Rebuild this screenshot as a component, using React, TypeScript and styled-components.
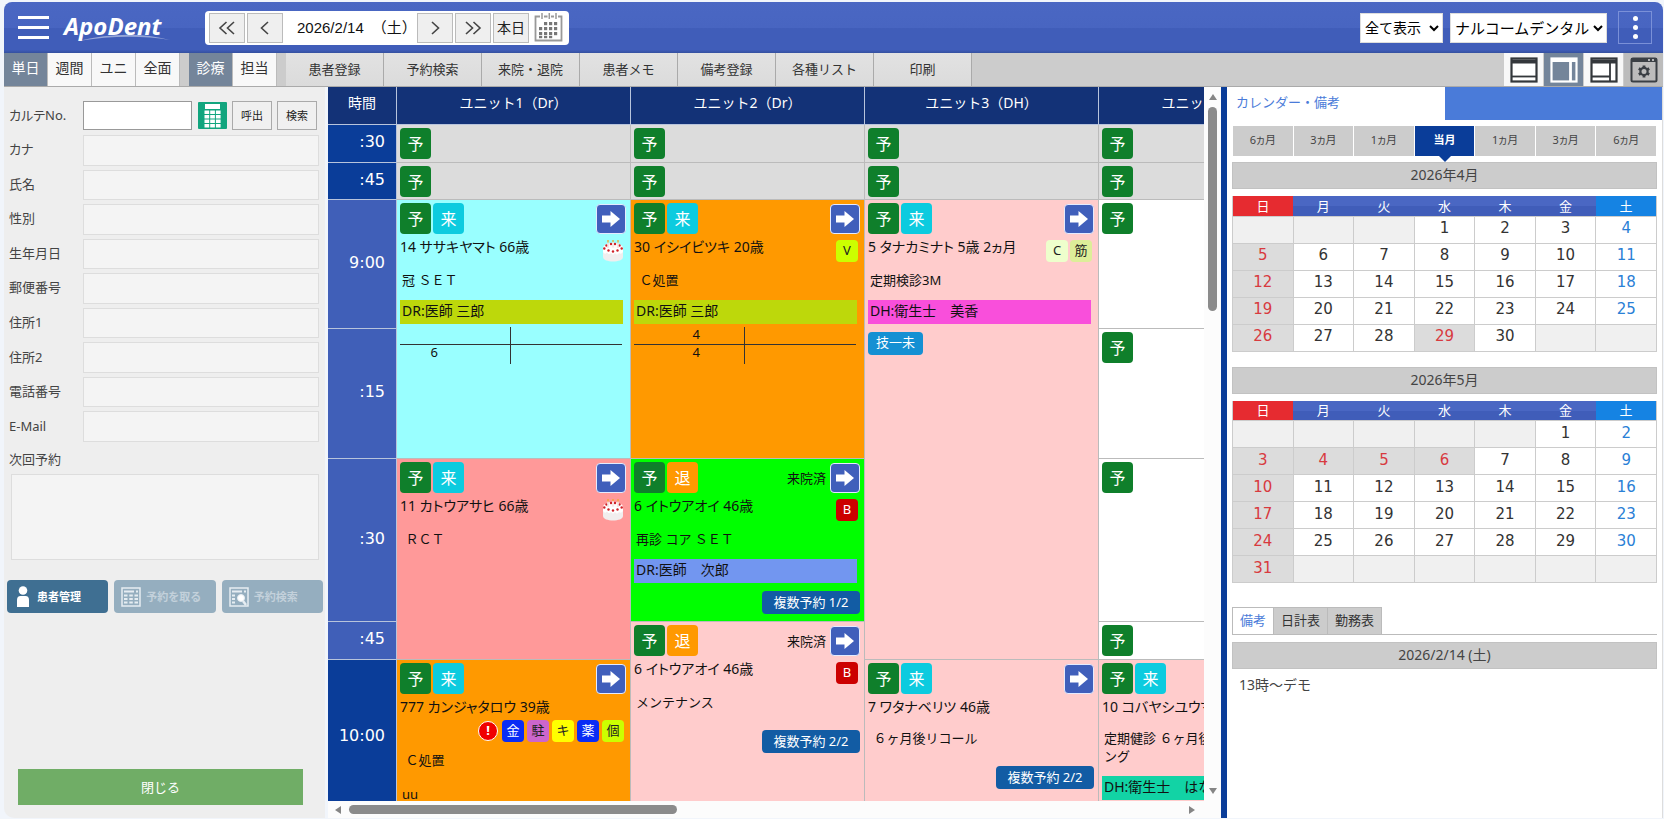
import React from "react";
import styled, { createGlobalStyle, css } from "styled-components";

const GlobalStyle = createGlobalStyle`
  *, *::before, *::after { box-sizing: border-box; }
  body {
    margin: 0;
    background: #fff;
    color: #333;
    font-family: "Noto Sans", "Noto Sans CJK JP", sans-serif;
    font-size: 13px;
    line-height: 18px;
  }
  button, input, textarea, select {
    margin: 0;
    padding: 0;
    border-radius: 0;
    font: inherit;
    color: inherit;
  }
  button { border: 0; background: none; cursor: pointer; white-space: nowrap; }
`;

const proportionalKana = css`
  font-feature-settings: "palt";
`;

const Shell = styled.div`
  display: flex;
  flex-direction: column;
  height: 100vh;
  padding: 2px 1px 1px 4px;
  background: #f1f5fb;
`;

/* ---------- Header ---------- */

const Header = styled.header`
  display: flex;
  align-items: center;
  flex: 0 0 51px;
  padding: 0 11px 0 14px;
  border-radius: 8px 8px 0 0;
  background: linear-gradient(#4a67c3 0, #4865c1 50%, #405db9 52%, #405db9 94%, #34509f 100%);
`;

const MenuButton = styled.button`
  display: flex;
  flex-direction: column;
  gap: 7px;
  width: 31px;
  margin-right: 15px;
`;

const MenuLine = styled.span`
  height: 3px;
  background: #fff;
`;

const Logo = styled.div`
  position: relative;
  width: 104px;
  height: 34px;
  margin-right: 37px;
  color: #fff;
  font: italic 700 24px/30px "Open Sans", sans-serif;
`;

const Swoosh = styled.svg`
  position: absolute;
  left: 14px;
  bottom: 3px;
  width: 92px;
  height: 10px;
`;

const DateBar = styled.div`
  display: flex;
  align-items: center;
  gap: 2px;
  height: 34px;
  padding: 0 6px 0 4px;
  border-radius: 4px;
  background: #fff;
`;

const StepButton = styled.button`
  display: flex;
  align-items: center;
  justify-content: center;
  width: 36px;
  height: 30px;
  border: 1px solid #bbb;
  background: #efefef;
  color: #222;
  font-size: 14px;
`;

const DateText = styled.div`
  display: flex;
  gap: 8px;
  width: 130px;
  padding-left: 12px;
  color: #111;
  font: 15px/22px "Liberation Sans", "Noto Sans CJK JP", sans-serif;
  white-space: nowrap;
`;

const IconButton = styled.button`
  display: flex;
  margin-left: 3px;
`;

const Spacer = styled.div`
  flex: 1;
`;

const HeaderSelect = styled.select<{ $width: number }>`
  width: ${(p) => p.$width}px;
  height: 30px;
  margin-right: 7px;
  border: 1px solid #ddd;
  background: #fff;
  color: #000;
  font-size: ${(p) => (p.$width > 100 ? 15 : 14)}px;
`;

const Kebab = styled.button`
  display: flex;
  flex-direction: column;
  align-items: center;
  justify-content: center;
  gap: 4px;
  width: 34px;
  height: 33px;
  margin-left: 4px;
  border: 1px solid #7a90d8;
`;

const Dot = styled.span`
  width: 5px;
  height: 5px;
  border-radius: 50%;
  background: #fff;
`;

/* ---------- Toolbar ---------- */

const Toolbar = styled.nav`
  display: flex;
  flex: 0 0 34px;
  border-bottom: 1px solid #aaa;
  background: #ccc;
`;

const ViewGroup = styled.div`
  display: flex;
  margin-right: 9px;
`;

const ViewButton = styled.button<{ $active?: boolean }>`
  width: 44px;
  padding-bottom: 3px;
  border-right: 1px solid #bbb;
  background: ${(p) => (p.$active ? "#74859a" : "#f8f8f8")};
  color: ${(p) => (p.$active ? "#fff" : "#333")};
  font-size: 14px;
`;

const MenuItem = styled.button`
  width: 98px;
  padding-bottom: 2px;
  border-right: 1px solid #aaa;
  background: linear-gradient(#e2e2e2, #dbdbdb);
  color: #333;
`;

const LayoutButton = styled.button<{ $tone: string }>`
  display: flex;
  align-items: center;
  justify-content: center;
  width: 40px;
  border-left: 1px solid #ccc;
  background: ${(p) => p.$tone};
`;

/* ---------- Patient panel ---------- */

const Main = styled.div`
  display: flex;
  flex: 1;
  min-height: 0;
`;

const PatientPanel = styled.aside`
  display: flex;
  flex-direction: column;
  flex: 0 0 321px;
  margin-right: 3px;
  padding: 14px 2px 13px 3px;
  border-radius: 0 0 0 10px;
  background: #eee;
`;

const ChartRow = styled.div`
  display: flex;
  align-items: center;
  padding: 0 2px;
  margin-bottom: 5px;
`;

const FieldLabel = styled.label`
  flex: 0 0 74px;
  padding-bottom: 2px;
  color: #444;
  white-space: nowrap;
  ${proportionalKana}
`;

const ChartInput = styled.input`
  width: 109px;
  height: 29px;
  margin-right: 3px;
  border: 1px solid #999;
  background: #fff;
`;

const SmallButton = styled.button`
  width: 40px;
  height: 29px;
  margin-left: 5px;
  border: 1px solid #aaa;
  background: #f0f0f0;
  color: #222;
  font-size: 11px;
`;

const Fields = styled.div`
  display: grid;
  grid-auto-rows: 1fr;
  gap: 4px;
  height: 307px;
  padding: 0 2px;
`;

const Field = styled.div`
  display: flex;
  align-items: center;
`;

const FieldInput = styled.input`
  width: 236px;
  height: 100%;
  border: 1px solid #ddd;
  background: #f4f4f4;
`;

const NextLabel = styled.label`
  margin: 8px 2px 6px;
  color: #444;
`;

const NextVisit = styled.textarea`
  flex: 0 0 86px;
  width: 308px;
  margin-left: 4px;
  border: 1px solid #ddd;
  background: #f4f4f4;
  resize: none;
`;

const ActionRow = styled.div`
  display: flex;
  gap: 6px;
  margin-top: 20px;
`;

const ActionButton = styled.button`
  display: flex;
  align-items: center;
  flex: 1;
  gap: 5px;
  height: 33px;
  padding-left: 7px;
  border-radius: 4px;
  background: #3f6f92;
  color: #fff;
  font-size: 11px;
  font-weight: 700;
  &:disabled {
    background: #95aebf;
    color: #c3d1db;
    cursor: default;
  }
`;

const CloseButton = styled.button`
  height: 36px;
  margin: auto 20px 0 11px;
  background: #70ad66;
  color: #fff;
`;

/* ---------- Schedule ---------- */

const Schedule = styled.section`
  display: grid;
  grid-template: minmax(0, 1fr) 17px / minmax(0, 1fr) 17px;
  flex: 1;
  min-width: 0;
  background: #fcfcfc;
`;

const Viewport = styled.div`
  min-width: 0;
  overflow: hidden;
`;

const Table = styled.table`
  width: 1005px;
  table-layout: fixed;
  border-collapse: separate;
  border-spacing: 0;
  color: #111;
`;

const UnitHead = styled.th<{ $time?: boolean }>`
  width: ${(p) => (p.$time ? 69 : 234)}px;
  height: 38px;
  padding: 0 0 5px;
  border-right: 1px solid #b8c4dc;
  border-bottom: 1px solid #b8c4dc;
  background: #133277;
  color: #fff;
  font-size: 14px;
  font-weight: 400;
`;

const TimeHead = styled.th<{ $height: number; $dark?: boolean }>`
  height: ${(p) => p.$height}px;
  padding: 0 11px 3px 0;
  border-right: 1px solid #b8c4dc;
  border-bottom: 1px solid #b8c4dc;
  background: ${(p) => (p.$dark ? "#0a3d99" : "#405fb8")};
  color: #fff;
  font: 400 16px/20px "DejaVu Sans", sans-serif;
  text-align: right;
`;

const Slot = styled.td<{ $color: string }>`
  padding: 3px 4px 0 3px;
  border-right: 1px solid #bbb;
  border-bottom: 1px solid #bbb;
  background: ${(p) => p.$color};
  vertical-align: top;
`;

const BadgeRow = styled.div`
  display: flex;
  align-items: center;
  gap: 2px;
  height: 31px;
`;

const Badge = styled.button<{ $color: string }>`
  width: 31px;
  height: 31px;
  border-radius: 4px;
  background: ${(p) => p.$color};
  color: #fff;
  font-size: 16px;
`;

const Arrived = styled.span`
  margin-left: auto;
`;

const ArrowButton = styled.button`
  display: flex;
  align-items: center;
  justify-content: center;
  width: 30px;
  height: 30px;
  margin-left: auto;
  border: 1px solid #e4ebff;
  border-radius: 4px;
  background: #405fbb;
  ${Arrived} + & {
    margin-left: 2px;
  }
`;

const NameRow = styled.div`
  display: flex;
  flex-wrap: wrap;
  justify-content: space-between;
  min-height: 26px;
  padding: 0 2px 0 0;
`;

const PatientName = styled.span`
  padding-top: 4px;
  height: 26px;
  font-size: 14px;
  white-space: nowrap;
  ${proportionalKana}
`;

const Tags = styled.span<{ $ownLine?: boolean }>`
  display: flex;
  gap: ${(p) => (p.$ownLine ? 3 : 2)}px;
  ${(p) =>
    p.$ownLine
      ? css`
          justify-content: flex-end;
          width: 100%;
        `
      : css`
          padding-top: 6px;
        `}
`;

const Tag = styled.span<{ $bg: string; $fg: string }>`
  width: 22px;
  height: 22px;
  border-radius: 4px;
  background: ${(p) => p.$bg};
  color: ${(p) => p.$fg};
  line-height: 21px;
  text-align: center;
`;

const Alert = styled.span`
  width: 20px;
  height: 20px;
  margin: 1px;
  border: 1px solid #fff;
  border-radius: 50%;
  background: #f00000;
  color: #fff;
  font-weight: 700;
  line-height: 17px;
  text-align: center;
`;

const Treatment = styled.p`
  margin: 9px 0 0 2px;
  padding-bottom: 11px;
  white-space: pre-wrap;
  & + & {
    margin-top: 5px;
  }
`;

const Band = styled.div<{ $color: string }>`
  height: 24px;
  margin-right: 3px;
  padding: 2px;
  background: ${(p) => p.$color};
  font-size: 14px;
  white-space: nowrap;
`;

const Teeth = styled.div`
  display: grid;
  grid-template: 18px 19px / 1fr 1fr;
  width: 222px;
  margin-top: 3px;
`;

const Quadrant = styled.span<{ $upper?: boolean; $left?: boolean }>`
  padding-right: ${(p) => (p.$left ? "44px" : "0")};
  border-right: ${(p) => (p.$left ? "1px solid #333" : "0")};
  border-bottom: ${(p) => (p.$upper ? "1px solid #333" : "0")};
  line-height: 15px;
  text-align: right;
`;

const Tooth = styled.span<{ $far?: boolean }>`
  margin-right: ${(p) => (p.$far ? 28 : 0)}px;
`;

const Chip = styled.span`
  display: block;
  width: 55px;
  height: 23px;
  margin-top: 8px;
  border-radius: 4px;
  background: #1590d3;
  color: #fff;
  line-height: 21px;
  text-align: center;
`;

const MultiButton = styled.button`
  display: block;
  width: 98px;
  height: 23px;
  margin: 8px 0 0 auto;
  border-radius: 4px;
  background: #125ca4;
  color: #fff;
  line-height: 21px;
`;

const ScrollBar = styled.div<{ $vertical?: boolean }>`
  display: flex;
  align-items: center;
  flex-direction: ${(p) => (p.$vertical ? "column" : "row")};
  grid-column: ${(p) => (p.$vertical ? 2 : 1)};
  grid-row: ${(p) => (p.$vertical ? 1 : 2)};
  gap: 5px;
  padding: ${(p) => (p.$vertical ? "6px 0" : "0 8px 0 6px")};
`;

const Thumb = styled.div<{ $vertical?: boolean }>`
  width: ${(p) => (p.$vertical ? "9px" : "38%")};
  height: ${(p) => (p.$vertical ? "29%" : "9px")};
  margin: ${(p) => (p.$vertical ? "1px 0 auto" : "0 auto 0 2px")};
  border-radius: 5px;
  background: #8b8b8b;
`;

/* ---------- Calendar panel ---------- */

const SidePanel = styled.aside`
  flex: 0 0 442px;
  border-left: 6px solid #0a3d99;
  border-right: 1px solid #ddd;
  background: #fff;
`;

const PanelTabs = styled.div`
  display: grid;
  grid-template-columns: 1fr 1fr;
  height: 33px;
  background: #4a7bd9;
`;

const PanelTab = styled.button`
  padding: 0 9px 3px;
  background: #fff;
  color: #4a7bd9;
  text-align: left;
`;

const PanelBody = styled.div`
  padding: 6px 5px 0;
`;

const Jumps = styled.div`
  display: flex;
  gap: 1px;
  padding: 0 1px;
  margin-bottom: 6px;
`;

const Jump = styled.button<{ $current?: boolean }>`
  position: relative;
  flex: 1;
  height: 30px;
  padding-bottom: 2px;
  background: ${(p) => (p.$current ? "#0a3d99" : "#ccc")};
  color: ${(p) => (p.$current ? "#fff" : "#444")};
  font-size: 11px;
  font-weight: ${(p) => (p.$current ? 700 : 400)};
  ${proportionalKana}
  &::after {
    content: ${(p) => (p.$current ? '""' : "none")};
    position: absolute;
    top: 100%;
    left: 50%;
    margin-left: -6px;
    border: 6px solid transparent;
    border-top-color: #0a3d99;
    border-bottom: 0;
  }
`;

const Title = styled.h2`
  height: 27px;
  margin: 0 0 7px;
  border: 1px solid #c2c2c2;
  background: #ccc;
  color: #444;
  font-size: 14px;
  font-weight: 400;
  line-height: 23px;
  text-align: center;
`;

const Month = styled.table`
  width: 100%;
  margin-bottom: 15px;
  border: 1px solid #ccc;
  border-top: 0;
  border-collapse: collapse;
  table-layout: fixed;
`;

const DayHead = styled.th<{ $day: number }>`
  height: 20px;
  padding: 0;
  background: ${(p) =>
    p.$day === 0 ? "#e62b30" : p.$day === 6 ? "#1583e3" : "linear-gradient(#4a67c3 50%, #405db9 52%)"};
  color: #fff;
  font-weight: 400;
  line-height: 18px;
`;

const DayCell = styled.td<{ $kind: "none" | "holiday" | "saturday" | "weekday" }>`
  height: 27px;
  padding: 0 0 3px;
  border: 1px solid #ccc;
  background: ${(p) => ({ none: "#f0f0f0", holiday: "#dcdcdc", saturday: "#fff", weekday: "#fff" })[p.$kind]};
  color: ${(p) => ({ none: "#333", holiday: "#d83a3f", saturday: "#2a80d6", weekday: "#333" })[p.$kind]};
  font: 15px/20px "DejaVu Sans", sans-serif;
  text-align: center;
`;

const NoteTabs = styled.div`
  display: flex;
  margin: 24px 0 7px;
  border-bottom: 1px solid #bbb;
`;

const NoteTab = styled.button<{ $active?: boolean }>`
  height: 27px;
  padding: 0 7px 2px;
  border: 1px solid #bbb;
  border-width: 1px 1px 0 ${(p) => (p.$active ? 1 : 0)}px;
  background: ${(p) => (p.$active ? "#fff" : "#ccc")};
  color: ${(p) => (p.$active ? "#4a7bd9" : "#333")};
`;

const Note = styled.p`
  margin: 0;
  padding-left: 7px;
  color: #444;
  font-size: 14px;
`;

/* ---------- Icons ---------- */

const Chevrons = ({ double, right }: { double?: boolean; right?: boolean }) => (
  <svg width="18" height="16" viewBox="0 0 18 16" fill="none" stroke="#444" strokeWidth="1.6" transform={right ? "scale(-1 1)" : undefined}>
    {double ? <path d="M8.5 2 2 8l6.500 6M16 2 9.500 8l6.500 6" /> : <path d="M12 2 5.500 8 12 14" />}
  </svg>
);

const CalendarIcon = () => (
  <svg width="29" height="29" viewBox="0 0 29 29" fill="none">
    <path d="M6 3.500H1.500v24h26v-24H24M10 3.500h3.500M17 3.500h3" stroke="#999" strokeWidth="1.800" />
    <path d="M8 0v6M15.300 0v6M22 0v6" stroke="#999" strokeWidth="1.500" />
    {[9, 14, 19].map((y, r) =>
      [5, 10, 15, 20].map((x, c) => (r === 0 && c === 0 ? null : <rect key={`${x}-${y}`} x={x} y={y} width="3.200" height="3.200" fill="#777" />))
    )}
    {[5, 10, 15].map((x) => (
      <rect key={x} x={x} y="23" width="3.200" height="2.200" fill="#777" />
    ))}
  </svg>
);

const CalculatorIcon = () => (
  <svg width="29" height="27" viewBox="0 0 29 27">
    <rect width="29" height="27" rx="1" fill="#12a57e" />
    <rect x="7" y="2" width="15" height="5" fill="#fff" />
    {[8.5, 13, 17.5, 22].map((y) => [6.5, 12.2, 17.9].map((x) => <rect key={`${x}-${y}`} x={x} y={y} width="4.700" height="3.500" fill="#fff" />))}
  </svg>
);

const LayoutIcon = ({ kind }: { kind: "bottom" | "side" | "both" }) => {
  const c = kind === "side" ? "#fff" : "#33373b";
  return (
    <svg width="28" height="26" viewBox="0 0 28 26" fill={kind === "side" ? "#74859a" : "#fff"} stroke={c}>
      <rect x="1.500" y="1.500" width="25" height="23" strokeWidth="2.200" />
      {kind === "bottom" && <path d="M1 19.500h26" strokeWidth="1.800" />}
      {kind === "side" && <path d="M1 3.500h26M20.500 2v22" strokeWidth="2.800" />}
      {kind === "both" && <path d="M20 6v18M1 19.500h19" strokeWidth="1.800" />}
      {kind !== "side" && <path d="M1 4.500h26" strokeWidth="4" />}
    </svg>
  );
};

const SettingsIcon = () => (
  <svg width="28" height="26" viewBox="0 0 28 26" fill="none" stroke="#3a3f44">
    <rect x="1.500" y="1.500" width="25" height="23" rx="1.500" strokeWidth="2" />
    <path d="M1 3h26" strokeWidth="4" />
    <path d="M18 3h2M22 3h2" stroke="#ddd" strokeWidth="1.500" />
    <circle cx="14" cy="14.500" r="3.600" strokeWidth="2.200" />
    <g strokeWidth="2.800">
      <path d="M14 8.500v2M14 18.500v2M8.800 11.500l1.800 1M17.400 16.500l1.800 1M8.800 17.500l1.800-1M17.400 12.500l1.800-1" />
    </g>
  </svg>
);

const ArrowIcon = () => (
  <svg width="18" height="16" viewBox="0 0 18 16" fill="#fff">
    <path d="M0 4.500h8.500V0L18 8l-9.500 8v-4.500H0z" />
  </svg>
);

const CakeIcon = () => (
  <svg width="22" height="22" viewBox="0 0 22 22">
    <path d="M1 9v8c0 6 20 6 20 0V9z" fill="#f1eeee" />
    <ellipse cx="11" cy="8" rx="10" ry="5" fill="#fffafa" />
    <path d="M1 8v4q2 3 4 .5 2 3 4 .5 2 3 4 0 2 3 4 0 2 2 4-1V8z" fill="#fff" />
    <g fill="#cf2027">
      {[[2.300, 8.500], [6.500, 10.500], [11, 11.500], [15.500, 10.500], [19.700, 8.500], [4.500, 5.500], [9, 4], [13, 4], [17.500, 5.500]].map(([x, y]) => (
        <circle key={`${x}-${y}`} cx={x} cy={y} r="1.200" />
      ))}
    </g>
    <path d="M6 2.500V8M11 2v5.500M16 2.500V8" stroke="#fff" strokeWidth="1.200" />
    <path d="M6 2.500V8M11 2v5.500M16 2.500V8" stroke="#d9a0a0" strokeWidth="0.500" />
    <path d="M6 0v2.500M11 0v2M16 0v2.500" stroke="#f0a830" strokeWidth="1.300" />
  </svg>
);

const PersonIcon = () => (
  <svg width="18" height="22" viewBox="0 0 18 22" fill="#fff">
    <circle cx="9" cy="4.500" r="4.300" />
    <path d="M3 21v-7q0-4 3.500-4h5q3.500 0 3.500 4v7z" />
  </svg>
);

const SheetIcon = ({ search }: { search?: boolean }) => (
  <svg width="20" height="20" viewBox="0 0 20 20" fill="none" stroke="#e6edf2">
    <rect x="1" y="1" width="18" height="18" strokeWidth="1.500" />
    <path d="M3 4.500h10" strokeWidth="2" />
    <path d="M15 4.500h2" strokeWidth="2" />
    {search ? (
      <>
        <path d="M3 8.500h3M3 12h3M3 15.500h3" strokeWidth="1.800" />
        <circle cx="12" cy="11" r="3.500" fill="#fff" />
        <path d="m14 14 3 4" strokeWidth="2.500" />
      </>
    ) : (
      <path d="M3 8.500h3.500M8.300 8.500h3.500M13.500 8.500H17M3 12h3.500M8.300 12h3.500M13.500 12H17M3 15.500h3.500M8.300 15.500h3.500M13.500 15.500H17" strokeWidth="2" />
    )}
  </svg>
);

const Triangle = ({ turn }: { turn: number }) => (
  <svg width="8" height="8" viewBox="0 0 8 8" fill="#858585">
    <path d="M4 1l4 6H0z" transform={`rotate(${turn} 4 4)`} />
  </svg>
);

/* ---------- Data ---------- */

const GREEN = "#0f7f2b";
const CYAN = "#0ccbdf";
const ORANGE = "#ff9900";
const PINK = "#ffcccc";
const CLOSED = "#dcdcdc";

type TagData = { text: string; bg: string; fg: string };
type Appointment = {
  name: string;
  left?: boolean;
  tags?: TagData[];
  alert?: boolean;
  cake?: boolean;
  treatments: string[];
  band?: { text: string; color: string };
  teeth?: { upper?: string; lower: string; far?: boolean };
  chip?: string;
  multi?: string;
};

const B_TAG: TagData = { text: "B", bg: "#cc0000", fg: "#fff" };

const Visit = ({ a }: { a: Appointment }) => (
  <>
    <BadgeRow>
      <Badge $color={GREEN}>予</Badge>
      <Badge $color={a.left ? ORANGE : CYAN}>{a.left ? "退" : "来"}</Badge>
      {a.left && <Arrived>来院済</Arrived>}
      <ArrowButton aria-label="移動">
        <ArrowIcon />
      </ArrowButton>
    </BadgeRow>
    <NameRow>
      <PatientName>{a.name}</PatientName>
      {(a.tags || a.cake) && (
        <Tags $ownLine={a.alert}>
          {a.alert && <Alert>!</Alert>}
          {a.cake && <CakeIcon />}
          {a.tags?.map((t) => (
            <Tag key={t.text} $bg={t.bg} $fg={t.fg}>
              {t.text}
            </Tag>
          ))}
        </Tags>
      )}
    </NameRow>
    {a.treatments.map((t) => (
      <Treatment key={t}>{t}</Treatment>
    ))}
    {a.band && <Band $color={a.band.color}>{a.band.text}</Band>}
    {a.teeth && (
      <Teeth>
        <Quadrant $upper $left>
          <Tooth $far={a.teeth.far}>{a.teeth.upper}</Tooth>
        </Quadrant>
        <Quadrant $upper />
        <Quadrant $left>
          <Tooth $far={a.teeth.far}>{a.teeth.lower}</Tooth>
        </Quadrant>
        <Quadrant />
      </Teeth>
    )}
    {a.chip && <Chip>{a.chip}</Chip>}
    {a.multi && <MultiButton>複数予約 {a.multi}</MultiButton>}
  </>
);

type Cell = { color: string; span?: number; visit?: Appointment };
const free = (color = "#fff"): Cell => ({ color });

const rows: { time: string; height: number; dark?: boolean; cells: Cell[] }[] = [
  { time: ":30", height: 38, dark: true, cells: [free(CLOSED), free(CLOSED), free(CLOSED), free(CLOSED)] },
  { time: ":45", height: 37, dark: true, cells: [free(CLOSED), free(CLOSED), free(CLOSED), free(CLOSED)] },
  {
    time: "9:00",
    height: 129,
    cells: [
      {
        color: "#99ffff",
        span: 2,
        visit: {
          name: "14 ササキヤマト 66歳",
          cake: true,
          treatments: ["冠 ＳＥＴ"],
          band: { text: "DR:医師 三郎", color: "#bdd80b" },
          teeth: { lower: "6", far: true },
        },
      },
      {
        color: ORANGE,
        span: 2,
        visit: {
          name: "30 イシイビツキ 20歳",
          tags: [{ text: "V", bg: "#ccff00", fg: "#222" }],
          treatments: [" Ｃ処置"],
          band: { text: "DR:医師 三郎", color: "#bdd80b" },
          teeth: { upper: "4", lower: "4" },
        },
      },
      {
        color: PINK,
        span: 4,
        visit: {
          name: "5 タナカミナト 5歳 2ヵ月",
          tags: [
            { text: "C", bg: "#eeffcc", fg: "#222" },
            { text: "筋", bg: "#ddee99", fg: "#222" },
          ],
          treatments: ["定期検診3M"],
          band: { text: "DH:衛生士　美香", color: "#f94fdb" },
          chip: "技一未",
        },
      },
      free(),
    ],
  },
  { time: ":15", height: 130, cells: [free()] },
  {
    time: ":30",
    height: 163,
    cells: [
      { color: "#ff9999", span: 2, visit: { name: "11 カトウアサヒ 66歳", cake: true, treatments: [" ＲＣＴ"] } },
      {
        color: "#00ff00",
        visit: {
          name: "6 イトウアオイ 46歳",
          left: true,
          tags: [B_TAG],
          treatments: ["再診 コア ＳＥＴ"],
          band: { text: "DR:医師　次郎", color: "#7296f0" },
          multi: "1/2",
        },
      },
      free(),
    ],
  },
  {
    time: ":45",
    height: 38,
    cells: [
      {
        color: PINK,
        span: 2,
        visit: { name: "6 イトウアオイ 46歳", left: true, tags: [B_TAG], treatments: ["メンテナンス"], multi: "2/2" },
      },
      free(),
    ],
  },
  {
    time: "10:00",
    height: 154,
    dark: true,
    cells: [
      {
        color: ORANGE,
        visit: {
          name: "777 カンジャタロウ 39歳",
          alert: true,
          tags: [
            { text: "金", bg: "#0a2cf5", fg: "#fff" },
            { text: "駐", bg: "#cc66cc", fg: "#222" },
            { text: "キ", bg: "#ffff00", fg: "#222" },
            { text: "薬", bg: "#0a2cf5", fg: "#fff" },
            { text: "個", bg: "#ccff00", fg: "#222" },
          ],
          treatments: [" Ｃ処置", "uu"],
        },
      },
      { color: PINK, visit: { name: "7 ワタナベリツ 46歳", treatments: [" ６ヶ月後リコール"], multi: "2/2" } },
      {
        color: PINK,
        visit: {
          name: "10 コバヤシユウマ 38歳",
          treatments: ["定期健診 ６ヶ月後クリーニ\nング"],
          band: { text: "DH:衛生士　はな", color: "#12d3a5" },
        },
      },
    ],
  },
];

const months = [
  { title: "2026年4月", offset: 3, days: 30, holidays: [29] },
  { title: "2026年5月", offset: 5, days: 31, holidays: [4, 5, 6] },
];

const MonthTable = ({ m }: { m: (typeof months)[number] }) => {
  const weeks = Math.ceil((m.offset + m.days) / 7);
  return (
    <>
      <Title>{m.title}</Title>
      <Month aria-label={m.title}>
        <thead>
          <tr>
            {["日", "月", "火", "水", "木", "金", "土"].map((d, i) => (
              <DayHead key={d} $day={i}>
                {d}
              </DayHead>
            ))}
          </tr>
        </thead>
        <tbody>
          {Array.from({ length: weeks }, (_, w) => (
            <tr key={w}>
              {Array.from({ length: 7 }, (_, d) => {
                const n = w * 7 + d - m.offset + 1;
                const inMonth = n > 0 && n <= m.days;
                const kind = !inMonth ? "none" : d === 0 || m.holidays.includes(n) ? "holiday" : d === 6 ? "saturday" : "weekday";
                return (
                  <DayCell key={d} $kind={kind}>
                    {inMonth ? n : ""}
                  </DayCell>
                );
              })}
            </tr>
          ))}
        </tbody>
      </Month>
    </>
  );
};

const fieldNames = ["カナ", "氏名", "性別", "生年月日", "郵便番号", "住所1", "住所2", "電話番号", "E-Mail"];
const menuItems = ["患者登録", "予約検索", "来院・退院", "患者メモ", "備考登録", "各種リスト", "印刷"];
const jumps = ["6ヵ月", "3ヵ月", "1ヵ月", "当月", "1ヵ月", "3ヵ月", "6ヵ月"];

export default function App() {
  return (
    <Shell>
      <GlobalStyle />
      <Header>
        <MenuButton aria-label="メニュー">
          <MenuLine />
          <MenuLine />
          <MenuLine />
        </MenuButton>
        <Logo>
          ApoDent
          <Swoosh viewBox="0 0 92 10" fill="#fff" fillOpacity="0.45">
            <path d="M0 9Q50-3 92 8Q50 1 0 9z" />
          </Swoosh>
        </Logo>
        <DateBar>
          <StepButton aria-label="前週">
            <Chevrons double />
          </StepButton>
          <StepButton aria-label="前日">
            <Chevrons />
          </StepButton>
          <DateText>
            <span>2026/2/14</span>
            <span>（土）</span>
          </DateText>
          <StepButton aria-label="翌日">
            <Chevrons right />
          </StepButton>
          <StepButton aria-label="翌週">
            <Chevrons double right />
          </StepButton>
          <StepButton>本日</StepButton>
          <IconButton aria-label="カレンダー">
            <CalendarIcon />
          </IconButton>
        </DateBar>
        <Spacer />
        <HeaderSelect $width={83} aria-label="表示">
          <option>全て表示</option>
        </HeaderSelect>
        <HeaderSelect $width={157} aria-label="医院">
          <option>ナルコームデンタル</option>
        </HeaderSelect>
        <Kebab aria-label="その他">
          <Dot />
          <Dot />
          <Dot />
        </Kebab>
      </Header>

      <Toolbar>
        <ViewGroup>
          <ViewButton $active>単日</ViewButton>
          <ViewButton>週間</ViewButton>
          <ViewButton>ユニ</ViewButton>
          <ViewButton>全面</ViewButton>
        </ViewGroup>
        <ViewGroup>
          <ViewButton $active>診療</ViewButton>
          <ViewButton>担当</ViewButton>
        </ViewGroup>
        {menuItems.map((t) => (
          <MenuItem key={t}>{t}</MenuItem>
        ))}
        <Spacer />
        <LayoutButton $tone="#f8f8f8" aria-label="下部表示">
          <LayoutIcon kind="bottom" />
        </LayoutButton>
        <LayoutButton $tone="#74859a" aria-label="右側表示">
          <LayoutIcon kind="side" />
        </LayoutButton>
        <LayoutButton $tone="#f8f8f8" aria-label="下部と右側表示">
          <LayoutIcon kind="both" />
        </LayoutButton>
        <LayoutButton $tone="#bcbcbc" aria-label="設定">
          <SettingsIcon />
        </LayoutButton>
      </Toolbar>

      <Main>
        <PatientPanel>
          <ChartRow>
            <FieldLabel htmlFor="chart-no">カルテNo.</FieldLabel>
            <ChartInput id="chart-no" />
            <IconButton aria-label="電卓">
              <CalculatorIcon />
            </IconButton>
            <SmallButton>呼出</SmallButton>
            <SmallButton>検索</SmallButton>
          </ChartRow>
          <Fields>
            {fieldNames.map((name, i) => (
              <Field key={name}>
                <FieldLabel htmlFor={`field-${i}`}>{name}</FieldLabel>
                <FieldInput id={`field-${i}`} readOnly />
              </Field>
            ))}
          </Fields>
          <NextLabel htmlFor="next-visit">次回予約</NextLabel>
          <NextVisit id="next-visit" readOnly />
          <ActionRow>
            <ActionButton>
              <PersonIcon />
              患者管理
            </ActionButton>
            <ActionButton disabled>
              <SheetIcon />
              予約を取る
            </ActionButton>
            <ActionButton disabled>
              <SheetIcon search />
              予約検索
            </ActionButton>
          </ActionRow>
          <CloseButton>閉じる</CloseButton>
        </PatientPanel>

        <Schedule>
          <Viewport>
            <Table>
              <thead>
                <tr>
                  <UnitHead $time>時間</UnitHead>
                  {["ユニット1（Dr）", "ユニット2（Dr）", "ユニット3（DH）", "ユニット4（Dr）"].map((u) => (
                    <UnitHead key={u}>{u}</UnitHead>
                  ))}
                </tr>
              </thead>
              <tbody>
                {rows.map((r, i) => (
                  <tr key={i}>
                    <TimeHead scope="row" $height={r.height} $dark={r.dark}>
                      {r.time}
                    </TimeHead>
                    {r.cells.map((c, j) => (
                      <Slot key={j} $color={c.color} rowSpan={c.span}>
                        {c.visit ? (
                          <Visit a={c.visit} />
                        ) : (
                          <BadgeRow>
                            <Badge $color={GREEN}>予</Badge>
                          </BadgeRow>
                        )}
                      </Slot>
                    ))}
                  </tr>
                ))}
              </tbody>
            </Table>
          </Viewport>
          <ScrollBar $vertical>
            <Triangle turn={0} />
            <Thumb $vertical />
            <Triangle turn={180} />
          </ScrollBar>
          <ScrollBar>
            <Triangle turn={-90} />
            <Thumb />
            <Triangle turn={90} />
          </ScrollBar>
        </Schedule>

        <SidePanel>
          <PanelTabs>
            <PanelTab>カレンダー・備考</PanelTab>
          </PanelTabs>
          <PanelBody>
            <Jumps>
              {jumps.map((t, i) => (
                <Jump key={i} $current={i === 3}>
                  {t}
                </Jump>
              ))}
            </Jumps>
            {months.map((m) => (
              <MonthTable key={m.title} m={m} />
            ))}
            <NoteTabs>
              <NoteTab $active>備考</NoteTab>
              <NoteTab>日計表</NoteTab>
              <NoteTab>勤務表</NoteTab>
            </NoteTabs>
            <Title>2026/2/14 (土)</Title>
            <Note>13時～デモ</Note>
          </PanelBody>
        </SidePanel>
      </Main>
    </Shell>
  );
}
